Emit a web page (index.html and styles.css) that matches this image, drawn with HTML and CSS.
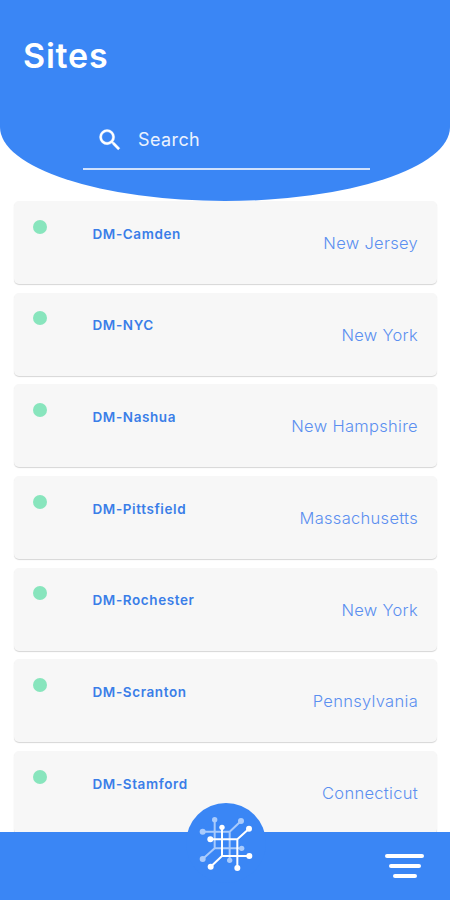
FILE: index.html
```html
<!DOCTYPE html>
<html lang="en">
<head>
    <meta charset="UTF-8">
    <meta name="viewport" content="width=device-width, initial-scale=1.0">
    <title>Sites</title>
    <link rel="stylesheet" href="styles.css">
</head>
<body>
    <div class="app">
        <header class="header">
            <h1 class="title">Sites</h1>
            <div class="search">
                <svg class="search-icon" viewBox="0 0 24 24" width="28" height="28">
                    <path fill="#fff" stroke="#fff" stroke-width=".3" d="M15.5 14h-.79l-.28-.27A6.47 6.47 0 0 0 16 9.5 6.5 6.5 0 1 0 9.5 16c1.61 0 3.09-.59 4.23-1.57l.27.28v.79l5 4.99L20.49 19l-4.99-5zm-6 0C7.01 14 5 11.99 5 9.5S7.01 5 9.5 5 14 7.01 14 9.5 11.99 14 9.5 14z"/>
                </svg>
                <span class="search-text">Search</span>
            </div>
        </header>

        <main class="list">
            <div class="card">
                <span class="status"></span>
                <span class="name">DM-Camden</span>
                <span class="state">New Jersey</span>
            </div>
            <div class="card">
                <span class="status"></span>
                <span class="name">DM-NYC</span>
                <span class="state">New York</span>
            </div>
            <div class="card">
                <span class="status"></span>
                <span class="name">DM-Nashua</span>
                <span class="state">New Hampshire</span>
            </div>
            <div class="card">
                <span class="status"></span>
                <span class="name">DM-Pittsfield</span>
                <span class="state">Massachusetts</span>
            </div>
            <div class="card">
                <span class="status"></span>
                <span class="name">DM-Rochester</span>
                <span class="state">New York</span>
            </div>
            <div class="card">
                <span class="status"></span>
                <span class="name">DM-Scranton</span>
                <span class="state">Pennsylvania</span>
            </div>
            <div class="card">
                <span class="status"></span>
                <span class="name">DM-Stamford</span>
                <span class="state">Connecticut</span>
            </div>
        </main>

        <footer class="footer">
            <div class="home">
                <svg viewBox="32 22 240 240" width="80" height="80">
                    <g stroke="#a9cbfc" fill="none" stroke-width="6">
                        <path d="M118 72V158H199M118 158L82 190M82 108H163L197 76M163 108V194"/>
                    </g>
                    <g fill="#a9cbfc">
                        <circle cx="118" cy="72" r="8"/>
                        <circle cx="82" cy="108" r="9"/>
                        <circle cx="197" cy="76" r="9"/>
                        <circle cx="199" cy="158" r="8"/>
                        <circle cx="82" cy="190" r="9"/>
                        <circle cx="163" cy="194" r="8"/>
                    </g>
                    <g stroke="#fff" fill="none" stroke-width="6">
                        <path d="M140 95V181H222M140 181L106 213M105 131H186L221 99M186 131V217"/>
                    </g>
                    <g fill="#fff">
                        <circle cx="140" cy="95" r="8"/>
                        <circle cx="105" cy="131" r="9"/>
                        <circle cx="221" cy="99" r="9"/>
                        <circle cx="222" cy="181" r="9"/>
                        <circle cx="106" cy="213" r="9"/>
                        <circle cx="186" cy="217" r="9"/>
                    </g>
                </svg>
            </div>
            <div class="menu">
                <span class="line line-long"></span>
                <span class="line line-mid"></span>
                <span class="line line-short"></span>
            </div>
        </footer>
    </div>
</body>
</html>
```
FILE: styles.css
```css
* {
    box-sizing: border-box;
}

body {
    margin: 0;
    background-color: #fff;
    font-family: Inter, "Open Sans", sans-serif;
}

.app {
    display: flex;
    flex-direction: column;
    height: 900px;
    overflow: hidden;
}

.header {
    flex: none;
    height: 201px;
    padding: 35px 23px 0;
    background-color: #3a86f5;
    border-radius: 0 0 50% 50% / 0 0 74px 74px;
}

.title {
    margin: 0;
    color: #fff;
    font-size: 34px;
    font-weight: 600;
    line-height: 42px;
    letter-spacing: 0.8px;
}

.search {
    display: flex;
    align-items: center;
    gap: 14px;
    width: 287px;
    height: 58px;
    margin: 35px 0 0 60px;
    padding: 0 0 1px 13px;
    border-bottom: 2px solid #cfe1fd;
}

.search-text {
    color: #eaf2fe;
    font-size: 18px;
    letter-spacing: 0.4px;
}

.list {
    flex: 1;
    display: flex;
    flex-direction: column;
    gap: 8.7px;
    min-height: 0;
    padding: 0 13px 0 13.5px;
    overflow: hidden;
}

.card {
    flex: none;
    display: flex;
    align-items: flex-start;
    height: 83px;
    padding: 18.5px 19px 0;
    background-color: #f7f7f7;
    border-radius: 5px;
    box-shadow: 0 1px 1px #d6d6d6;
}

.status {
    width: 14px;
    height: 14px;
    border-radius: 50%;
    background-color: #88e5bd;
}

.name {
    margin: 5px 0 0 46px;
    color: #3a7ee8;
    font-size: 13.5px;
    font-weight: 600;
    line-height: 18px;
    letter-spacing: 0.6px;
}

.state {
    margin: 12.5px 0 0 auto;
    color: #5b8ff0;
    font-size: 16.5px;
    font-weight: 300;
    line-height: 22px;
    letter-spacing: 0.3px;
}

.footer {
    flex: none;
    position: relative;
    display: flex;
    justify-content: flex-end;
    height: 68px;
    padding: 22px 26px 0;
    background-color: #3a86f5;
}

/* round button sticking out over the bar */
.home {
    position: absolute;
    top: -29px;
    left: 186px;
    width: 80px;
    height: 80px;
    border-radius: 50%;
    background-color: #3a86f5;
}

.home svg {
    display: block;
}

.menu {
    display: flex;
    flex-direction: column;
    align-items: center;
    gap: 6px;
    width: 39px;
}

.line {
    height: 4px;
    border-radius: 2px;
    background-color: #fff;
}

.line-long {
    width: 39px;
}

.line-mid {
    width: 32px;
}

.line-short {
    width: 24px;
}
```
